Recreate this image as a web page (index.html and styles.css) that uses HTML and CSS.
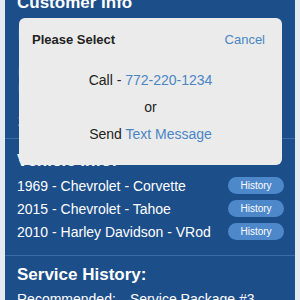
FILE: index.html
```html
<!DOCTYPE html>
<html lang="en">
<head>
    <meta charset="UTF-8">
    <meta name="viewport" content="width=device-width, initial-scale=1.0">
    <title>Customer Info</title>
    <link rel="stylesheet" href="styles.css">
</head>
<body>

    <div class="panel">
        <!-- Customer -->
        <div class="section customer">
            <h2 class="title">Customer Info</h2>
            <div class="cust-line first">Bob Miller</div>
            <div class="cust-line second">Port St. Lucie, FL</div>
            <div class="cust-line third">Phone: 772-220-1234</div>
            <div class="cust-line fourth">2 Vehicles</div>
        </div>

        <!-- Vehicles -->
        <div class="section vehicles">
            <h2 class="title">Vehicle Info:</h2>
            <div class="vehicle-row">
                <span>1969 - Chevrolet - Corvette</span>
                <button class="history-btn">History</button>
            </div>
            <div class="vehicle-row">
                <span>2015 - Chevrolet - Tahoe</span>
                <button class="history-btn">History</button>
            </div>
            <div class="vehicle-row">
                <span>2010 - Harley Davidson - VRod</span>
                <button class="history-btn">History</button>
            </div>
        </div>

        <!-- Service -->
        <div class="section service">
            <h2 class="title">Service History:</h2>
            <div class="service-row">
                <span>Recommended:</span>
                <span>Service Package #3</span>
            </div>
        </div>
    </div>

    <!-- Contact popup -->
    <div class="popup">
        <div class="popup-head">
            <span class="popup-title">Please Select</span>
            <a class="link" href="#">Cancel</a>
        </div>
        <p class="popup-option call">Call - <a class="link" href="#">772-220-1234</a></p>
        <p class="popup-option or">or</p>
        <p class="popup-option">Send <a class="link" href="#">Text Message</a></p>
    </div>

</body>
</html>
```
FILE: styles.css
```css
body {
    font-family: "Liberation Sans", Arial, sans-serif;
    background-color: #e3eaf2;
    margin: 0;
    height: 300px;
    overflow: hidden;
}

.panel {
    background-color: #1c4e8a;
    margin: 0 5px;
    min-height: 300px;
    color: white;
}

.section {
    padding: 0 12px;
}

.section + .section {
    border-top: 1px solid #3d6ba3;
}

.title {
    font-size: 17px;
    line-height: 20px;
    font-weight: bold;
    margin: 0;
}

.customer {
    padding-bottom: 9px;
}

.customer .title {
    margin-top: -7px;
}

.cust-line {
    font-size: 14px;
    line-height: 16px;
    padding-left: 1px;
}

.cust-line.first { margin-top: 13px; }
.cust-line.second { margin-top: 22px; }
.cust-line.third { margin-top: 0; }
.cust-line.fourth { margin-top: 17px; }

.vehicles {
    padding-top: 12px;
    padding-bottom: 12px;
}

.vehicles .title {
    margin-bottom: 3px;
}

.vehicle-row {
    display: flex;
    justify-content: space-between;
    align-items: center;
    height: 23px;
    font-size: 14px;
}

.history-btn {
    width: 56px;
    height: 17px;
    padding: 0;
    margin-right: -1px;
    border: none;
    border-radius: 9px;
    background-color: #4d88cb;
    color: white;
    font-family: "Liberation Sans", Arial, sans-serif;
    font-size: 10px;
}

.service {
    padding-top: 9px;
}

.service .title {
    margin-bottom: 4px;
}

.service-row {
    display: grid;
    grid-template-columns: 113px auto;
    font-size: 14px;
    line-height: 20px;
}

.popup {
    position: absolute;
    left: 19px;
    top: 18px;
    width: 263px;
    height: 147px;
    background-color: #ebebeb;
    border-radius: 6px;
    color: #222;
    font-size: 14px;
}

.popup-head {
    display: flex;
    justify-content: space-between;
    align-items: baseline;
    padding: 14px 17px 0 13px;
    font-size: 13px;
}

.popup-title {
    font-weight: bold;
}

.link {
    color: #4a86c5;
    text-decoration: none;
}

.popup-option {
    text-align: center;
    margin: 0;
    line-height: 16px;
}

.popup-option.call {
    margin-top: 25px;
}

.popup-option.or {
    margin: 11px 0;
}
```
